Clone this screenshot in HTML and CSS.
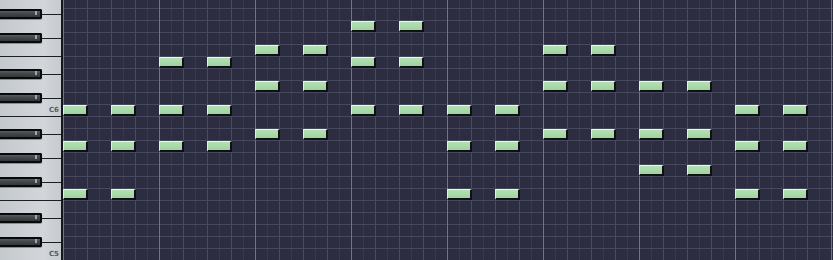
FILE: index.html
```html
<!DOCTYPE html>
<html lang="en">
<head>
    <meta charset="UTF-8">
    <title>Piano Roll</title>
    <link rel="stylesheet" href="styles.css">
</head>
<body>
    <div class="roll">
        <div class="keyboard">
            <div class="key top-part"></div>
            <div class="key black"><span class="black-key"></span></div>
            <div class="key"></div>
            <div class="key black"><span class="black-key"></span></div>
            <div class="key"></div>
            <div class="key edge"></div>
            <div class="key black"><span class="black-key"></span></div>
            <div class="key"></div>
            <div class="key black"><span class="black-key"></span></div>
            <div class="key"><span class="label">C6</span></div>
            <div class="key edge"></div>
            <div class="key black"><span class="black-key"></span></div>
            <div class="key"></div>
            <div class="key black"><span class="black-key"></span></div>
            <div class="key"></div>
            <div class="key black"><span class="black-key"></span></div>
            <div class="key"></div>
            <div class="key edge"></div>
            <div class="key black"><span class="black-key"></span></div>
            <div class="key"></div>
            <div class="key black"><span class="black-key"></span></div>
            <div class="key"><span class="label">C5</span></div>
        </div>

        <div class="grid">
            <!-- G6 -->
            <div class="note g6 s6"></div>
            <div class="note g6 s7"></div>
            <!-- F6 -->
            <div class="note f6 s4"></div>
            <div class="note f6 s5"></div>
            <div class="note f6 s10"></div>
            <div class="note f6 s11"></div>
            <!-- E6 -->
            <div class="note e6 s2"></div>
            <div class="note e6 s3"></div>
            <div class="note e6 s6"></div>
            <div class="note e6 s7"></div>
            <!-- D6 -->
            <div class="note d6 s4"></div>
            <div class="note d6 s5"></div>
            <div class="note d6 s10"></div>
            <div class="note d6 s11"></div>
            <div class="note d6 s12"></div>
            <div class="note d6 s13"></div>
            <!-- C6 -->
            <div class="note c6 s0"></div>
            <div class="note c6 s1"></div>
            <div class="note c6 s2"></div>
            <div class="note c6 s3"></div>
            <div class="note c6 s6"></div>
            <div class="note c6 s7"></div>
            <div class="note c6 s8"></div>
            <div class="note c6 s9"></div>
            <div class="note c6 s14"></div>
            <div class="note c6 s15"></div>
            <!-- A#5 -->
            <div class="note as5 s4"></div>
            <div class="note as5 s5"></div>
            <div class="note as5 s10"></div>
            <div class="note as5 s11"></div>
            <div class="note as5 s12"></div>
            <div class="note as5 s13"></div>
            <!-- A5 -->
            <div class="note a5 s0"></div>
            <div class="note a5 s1"></div>
            <div class="note a5 s2"></div>
            <div class="note a5 s3"></div>
            <div class="note a5 s8"></div>
            <div class="note a5 s9"></div>
            <div class="note a5 s14"></div>
            <div class="note a5 s15"></div>
            <!-- G5 -->
            <div class="note g5 s12"></div>
            <div class="note g5 s13"></div>
            <!-- F5 -->
            <div class="note f5 s0"></div>
            <div class="note f5 s1"></div>
            <div class="note f5 s8"></div>
            <div class="note f5 s9"></div>
            <div class="note f5 s14"></div>
            <div class="note f5 s15"></div>
        </div>
    </div>
</body>
</html>
```

FILE: styles.css
```css
body {
    margin: 0;
    background-color: #2c2d40;
    overflow: hidden;
}
.roll {
    display: flex;
    width: 833px;
    height: 260px;
    overflow: hidden;
}

/* keyboard */
.keyboard {
    display: flex;
    flex-direction: column;
    width: 61px;
    flex-shrink: 0;
    border-right: 2px solid #16171e;
    background-color: #cdd1d6;
}
.key {
    position: relative;
    height: 12px;
    flex-shrink: 0;
    background: linear-gradient(90deg, #c4c9ce, #d2d6db 70%, #c6cbd0);
}
.key.top-part {
    height: 8px;
}
.key.edge {
    box-shadow: inset 0 1px #1c1f23;
}
.key.black::after {
    content: "";
    position: absolute;
    top: 6px;
    left: 41px;
    right: 0;
    height: 1px;
    background-color: #1c1f23;
}
.black-key {
    display: block;
    position: relative;
    box-sizing: border-box;
    width: 42px;
    height: 10px;
    margin-top: 1px;
    background: linear-gradient(#5a5d60, #45484b 40%, #34373a);
    border: 2px solid #08090a;
    border-left: none;
    border-radius: 0 2px 2px 0;
    box-shadow: 0 1px 1px rgba(0, 0, 0, 0.35);
}
.black-key::after {
    content: "";
    position: absolute;
    top: 0;
    right: 3px;
    width: 2px;
    height: 4px;
    background-color: #a2a6aa;
}
.label {
    display: block;
    text-align: right;
    padding-right: 2px;
    font-family: "DejaVu Sans", sans-serif;
    font-size: 7px;
    font-weight: bold;
    line-height: 12px;
    color: #555b62;
}

/* note grid */
.grid {
    flex: 1;
    display: grid;
    grid-template-columns: repeat(16, 48px);
    grid-template-rows: 8px repeat(21, 12px);
    background-color: #2c2d40;
    background-image:
        linear-gradient(90deg, #71738a 1px, transparent 1px),
        linear-gradient(180deg, #46485e 1px, transparent 1px),
        linear-gradient(90deg, #484a60 1px, transparent 1px),
        linear-gradient(90deg, #37384c 1px, transparent 1px);
    background-size: 96px 100%, 100% 12px, 24px 100%, 12px 100%;
    background-position: 0 0, 0 8px, 0 0, 0 0;
}
.note {
    box-sizing: border-box;
    width: 25px;
    height: 11px;
    margin-top: 1px;
    background: linear-gradient(#b4e0b4, #a0d2a0);
    border-top: 1px solid #e8f8e8;
    border-left: 1px solid #dcf2dc;
    border-right: 2px solid #0e1012;
    border-bottom: 2px solid #0e1012;
}

.g6 { grid-row: 3; }
.f6 { grid-row: 5; }
.e6 { grid-row: 6; }
.d6 { grid-row: 8; }
.c6 { grid-row: 10; }
.as5 { grid-row: 12; }
.a5 { grid-row: 13; }
.g5 { grid-row: 15; }
.f5 { grid-row: 17; }

.s0 { grid-column: 1; }
.s1 { grid-column: 2; }
.s2 { grid-column: 3; }
.s3 { grid-column: 4; }
.s4 { grid-column: 5; }
.s5 { grid-column: 6; }
.s6 { grid-column: 7; }
.s7 { grid-column: 8; }
.s8 { grid-column: 9; }
.s9 { grid-column: 10; }
.s10 { grid-column: 11; }
.s11 { grid-column: 12; }
.s12 { grid-column: 13; }
.s13 { grid-column: 14; }
.s14 { grid-column: 15; }
.s15 { grid-column: 16; }
```
